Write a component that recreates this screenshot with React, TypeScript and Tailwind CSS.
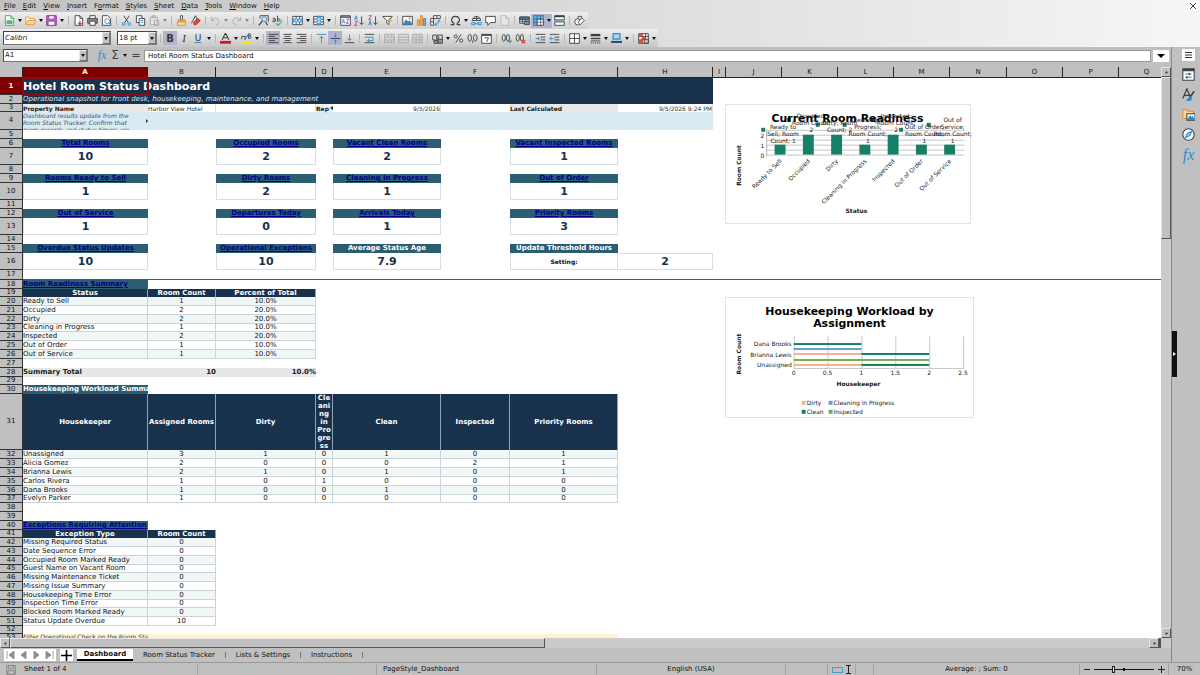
import type { ReactNode } from "react";
import clsx from "clsx";

/* ---------- icons ---------- */

const BLUE = "#2b8fd0";
const DARK = "#3f3f3f";
const MUTED = "#a9a9a9";

function Icon({ children, big }: { children: ReactNode; big?: boolean }) {
  return (
    <svg
      viewBox="0 0 16 16"
      className={big ? "h-[13px] w-[13px]" : "h-[11px] w-[11px]"}
      fill="none"
      stroke={DARK}
      strokeWidth="1.3"
      aria-hidden="true"
    >
      {children}
    </svg>
  );
}

const NewDoc = () => (
  <Icon>
    <path d="M2 1h8l4 4v10H2z" fill="#fff" stroke="#3aa757" />
    <path d="M10 1v4h4" stroke="#3aa757" />
    <path d="M4 8h8v5H4zM4 10.500h8M8 8v5" fill="#3aa757" stroke="#7fcf92" strokeWidth="0.8" />
  </Icon>
);
const OpenFolder = () => (
  <Icon>
    <path d="M1 14V3h5l1 2h7v3" fill="#fff3e0" stroke="#e9993a" />
    <path d="M1 14l3-6h12l-3 6z" fill="#fbd49c" stroke="#e9993a" />
  </Icon>
);
const Save = () => (
  <Icon>
    <path d="M1 1h14v14H1z" fill="#b366c9" stroke="#93359f" />
    <path d="M4 1h8v5H4zM3 9h10v6H3z" fill="#fff" stroke="#93359f" />
  </Icon>
);
const ExportPdf = () => (
  <Icon>
    <path d="M3 1h7l4 4v10H3z" fill="#fff" />
    <path d="M10 1v4h4" />
    <path d="M10 8v6M7.500 11.500L10 14l2.500-2.500" stroke="#d8332a" strokeWidth="1.600" />
  </Icon>
);
const Print = () => (
  <Icon>
    <path d="M4 5V1h8v4" fill="#fff" />
    <path d="M1 5h14v7H1z" fill="#8a8a8a" />
    <path d="M4 9h8v6H4z" fill="#fff" />
  </Icon>
);
const Preview = () => (
  <Icon>
    <path d="M2 1h8l4 4v10H2z" fill="#fff" />
    <circle cx="9" cy="9" r="3.500" stroke={BLUE} />
    <path d="M11.500 11.500L15 15" stroke={BLUE} />
  </Icon>
);
const Cut = () => (
  <Icon>
    <path d="M4 1l6.500 10M12 1L5.500 11" />
    <circle cx="4" cy="13" r="2" stroke={BLUE} />
    <circle cx="12" cy="13" r="2" stroke={BLUE} />
  </Icon>
);
const Copy = () => (
  <Icon>
    <path d="M2 1h8v10H2z" fill="#fff" />
    <path d="M6 5h8v10H6z" fill="#fff" />
    <path d="M8 8h4M8 10.500h4" stroke={BLUE} />
  </Icon>
);
const Paste = () => (
  <Icon>
    <path d="M2 3h10v11H2zM5 1h4v3H5zM8 8h6v7H8z" fill="#e4e4e4" stroke={MUTED} />
  </Icon>
);
const Brush = () => (
  <Icon>
    <path d="M6.500 1h3v6h-3z" fill="#fff" />
    <path d="M3 7h10v3H3z" fill="#f2b166" stroke="#e08a2c" />
    <path d="M2 10h12v5H2z" fill="#f8d9ae" stroke="#e08a2c" />
  </Icon>
);
const Eraser = () => (
  <Icon>
    <path d="M2 12L8 1l3 8" />
    <path d="M5 11l6-6 4 3-6 6H6z" fill="#e5483e" stroke="#c8281e" />
  </Icon>
);
const Undo = () => (
  <Icon>
    <path d="M2 3v5h5M2 8c3-5 10-5 11 1 0 3-2 5-4 5" stroke={MUTED} />
  </Icon>
);
const Redo = () => (
  <Icon>
    <path d="M14 3v5H9M14 8C11 3 4 3 3 9c0 3 2 5 4 5" stroke={MUTED} />
  </Icon>
);
const Find = () => (
  <Icon>
    <path d="M3 5V1h12v9" />
    <circle cx="9" cy="6" r="3.500" stroke={BLUE} />
    <path d="M6.500 8.500L1 15M11 10l3 5" strokeWidth="1.600" />
  </Icon>
);
const Spelling = () => (
  <Icon>
    <path d="M1 5c3-1 4 0 4 2v2M5 7c-5 0-5 3-2 3l2-1M8 1v8c5 1 5-5 0-3" />
    <path d="M6 12l3 3 6-7" stroke="#3aa757" strokeWidth="1.600" />
  </Icon>
);
const RowTable = () => (
  <Icon>
    <path d="M1 2h14v12H1zM6 2v12M11 2v12" fill="#fff" />
    <path d="M1 6h14v4H1z" fill="#63b3ea" stroke={BLUE} />
    <path d="M6 6v4M11 6v4" stroke="#fff" />
  </Icon>
);
const ColTable = () => (
  <Icon>
    <path d="M1 2h14v12H1zM1 6h14M1 10h14" fill="#fff" />
    <path d="M6 2h5v12H6z" fill="#63b3ea" stroke={BLUE} />
    <path d="M6 6h5M6 10h5" stroke="#fff" />
  </Icon>
);
const SortDialog = () => (
  <Icon>
    <path d="M1 1h14v14H1z" fill="#fff" />
    <path d="M1 3h14" strokeWidth="2" />
    <path d="M3 12l2-6 2 6M4 10h2" stroke={BLUE} />
    <path d="M9 6h4l-4 6h4" stroke="#a53fb8" />
  </Icon>
);
const SortAsc = () => (
  <Icon>
    <path d="M1 7l2-6 2 6M2 5h2" stroke={BLUE} />
    <path d="M1 9h4l-4 6h4" stroke="#a53fb8" />
    <path d="M11 2v12M8 11l3 3 3-3" />
  </Icon>
);
const SortDesc = () => (
  <Icon>
    <path d="M1 1h4L1 7h4" stroke="#a53fb8" />
    <path d="M1 15l2-6 2 6M2 13h2" stroke={BLUE} />
    <path d="M11 2v12M8 11l3 3 3-3" />
  </Icon>
);
const Filter = () => (
  <Icon>
    <path d="M1 2h14l-5 6v6l-3-2V8z" fill="#fff" />
    <path d="M8 8l4-3M8 14l6-7" stroke="#e9993a" strokeWidth="1.600" />
  </Icon>
);
const Picture = () => (
  <Icon>
    <path d="M1 2h14v12H1z" fill="#fff" />
    <path d="M2 13l4-6 3 3 2-2 3 5z" fill={BLUE} stroke={BLUE} />
    <circle cx="11" cy="5" r="1" fill="#e9993a" stroke="#e9993a" />
  </Icon>
);
const ChartIcon = () => (
  <Icon>
    <path d="M2 7h3v8H2z" fill="#f2b166" stroke="#e08a2c" />
    <path d="M6.500 1h3v14h-3z" fill="#f2b166" stroke="#e08a2c" />
    <path d="M11 5h3v10h-3z" fill="#63b3ea" stroke={BLUE} />
  </Icon>
);
const Pivot = () => (
  <Icon>
    <path d="M1 5h4v10H1zM5 1h10v4H5zM1 10h4M10 1v4" fill="#fff" />
    <path d="M7 14c4 0 6-2 6-6M11 10l2-3 2 3M9 11l-2 3 3 2" stroke={BLUE} />
  </Icon>
);
const Omega = () => (
  <Icon>
    <path d="M1 14h4.500v-2C0 9 2 2 8 2s8 7 2.500 10v2H15" strokeWidth="1.500" />
  </Icon>
);
const Hyperlink = () => (
  <Icon>
    <path d="M2 8a6 6 0 0112 0zM8 2v6M3 5h10" />
    <path d="M1 11h5v3H1zM10 11h5v3h-5zM5 12.500h6" stroke={BLUE} />
  </Icon>
);
const Comment = () => (
  <Icon>
    <path d="M1 2h14v9H8l-4 4v-4H1z" fill="#fff" />
  </Icon>
);
const HeaderFooter = () => (
  <Icon>
    <path d="M3 1h7l4 4v10H3z" fill="#e6e6e6" stroke="#b8b8b8" />
    <path d="M10 1v4h4" stroke="#b8b8b8" />
  </Icon>
);
const PrintArea = () => (
  <Icon>
    <path d="M1 3h14v9H1zM1 6h14M1 9h14M5 3v9M10 3v9" fill="#fff" />
    <path d="M1 3h14v3H1z" fill={BLUE} />
    <path d="M8 9h7v5H8z" fill="#8a8a8a" />
  </Icon>
);
const Freeze = () => (
  <Icon>
    <path d="M1 1h14v14H1z" fill="#fff" />
    <path d="M1 1h14v5H6v9H1z" fill="#63b3ea" stroke={BLUE} />
    <path d="M6 1v14M11 1v14M1 6h14M1 10.500h14" strokeWidth="0.900" />
  </Icon>
);
const SplitWindow = () => (
  <Icon>
    <path d="M1 1h14v6H1zM1 10h14v5H1z" fill="#fff" />
    <path d="M1 2h14" strokeWidth="2.500" />
    <path d="M0 8.500h16" stroke={BLUE} strokeDasharray="2 1" />
  </Icon>
);
const Shapes = () => (
  <Icon>
    <path d="M6 2h5v5H6z" fill="#fff" />
    <circle cx="5.500" cy="10" r="4.500" fill="#fff" />
    <path d="M11 4l4 4-6 6-3-3z" fill="#fff" />
  </Icon>
);

const AlignLeft = () => (
  <Icon>
    <path d="M1 2h14M1 5h9M1 8h14M1 11h9M1 14h14" />
  </Icon>
);
const AlignCenter = () => (
  <Icon>
    <path d="M2 2h12M4 5h8M2 8h12M4 11h8M2 14h12" />
  </Icon>
);
const AlignRight = () => (
  <Icon>
    <path d="M1 2h14M6 5h9M1 8h14M6 11h9M1 14h14" />
  </Icon>
);
const AlignTop = () => (
  <Icon>
    <path d="M1 2h14" stroke={BLUE} />
    <path d="M8 14V5M5 8l3-3 3 3" stroke={BLUE} />
  </Icon>
);
const AlignMiddle = () => (
  <Icon>
    <path d="M1 8h14" />
    <path d="M8 0v6M6 4l2 2 2-2M8 16v-6M6 12l2-2 2 2" stroke={BLUE} />
  </Icon>
);
const AlignBottom = () => (
  <Icon>
    <path d="M1 14h14" />
    <path d="M8 2v9M5 8l3 3 3-3" stroke={BLUE} />
  </Icon>
);
const Wrap = () => (
  <Icon>
    <path d="M1 2h14M1 14h14" />
    <path d="M1 6h12v5H5M8 8l-3 3 3 2" stroke={BLUE} />
  </Icon>
);
const Merge = () => (
  <Icon>
    <path d="M1 2h14v12H1zM1 6h14M1 10h14M6 2v4M11 2v4M6 10v4M11 10v4" stroke={MUTED} />
  </Icon>
);
const MergeAll = () => (
  <Icon>
    <path d="M1 2h14v12H1zM1 6h14M1 10h14" stroke={MUTED} />
  </Icon>
);
const Unmerge = () => (
  <Icon>
    <path d="M1 2h14v12H1zM1 6h14M1 10h14M6 2v12M11 2v12" stroke={MUTED} />
  </Icon>
);
const Currency = () => (
  <Icon>
    <path d="M1 3h14v7H1z" fill="#ddd" />
    <circle cx="8" cy="6.500" r="2" fill="#999" />
    <path d="M3 11h5v4H3zM9 9h6v6H9z" fill="#999" />
  </Icon>
);
const Percent = () => (
  <Icon>
    <circle cx="4" cy="5" r="2.300" />
    <circle cx="12" cy="11" r="2.300" />
    <path d="M12 2L4 14" />
  </Icon>
);
const Decimal = () => (
  <Icon>
    <ellipse cx="4" cy="7" rx="2.600" ry="5" />
    <ellipse cx="12" cy="7" rx="2.600" ry="5" />
    <path d="M8 11v3" />
  </Icon>
);
const DateIcon = () => (
  <Icon>
    <path d="M1 2h14v13H1z" fill="#fff" />
    <path d="M1 3h14" strokeWidth="2.200" />
    <path d="M5 7h6l-3 6" />
  </Icon>
);
const AddDecimal = () => (
  <Icon>
    <ellipse cx="4" cy="7" rx="2.300" ry="5" />
    <ellipse cx="10" cy="7" rx="2.300" ry="5" />
    <path d="M13 9v6M10 12h6" stroke={BLUE} strokeWidth="1.600" />
  </Icon>
);
const RemoveDecimal = () => (
  <Icon>
    <ellipse cx="4" cy="7" rx="2.300" ry="5" />
    <ellipse cx="10" cy="7" rx="2.300" ry="5" />
    <path d="M10 10l5 5M15 10l-5 5" stroke="#d8332a" strokeWidth="1.600" />
  </Icon>
);
const IndentMore = () => (
  <Icon>
    <path d="M1 2h14M8 6h7M8 10h7M1 14h14" />
    <path d="M1 8h5M4 5.500L6.500 8 4 10.500" stroke={BLUE} />
  </Icon>
);
const IndentLess = () => (
  <Icon>
    <path d="M1 2h14M8 6h7M8 10h7M1 14h14" />
    <path d="M7 8H1M4 5.500L1 8l3 2.500" stroke={BLUE} />
  </Icon>
);
const Borders = () => (
  <Icon>
    <path d="M1 1h14v14H1z" fill="#fff" />
    <path d="M8 1v14M1 8h14" />
  </Icon>
);
const BorderStyle = () => (
  <Icon>
    <path d="M1 3h14" strokeWidth="3.500" />
    <path d="M1 8h14" strokeWidth="2" />
    <path d="M1 11.500h14" />
    <path d="M1 14.500h14" strokeDasharray="2 1" />
  </Icon>
);
const BorderColor = () => (
  <Icon>
    <path d="M3 1h10v8H3z" fill="#a9d4f2" stroke={BLUE} strokeWidth="1.800" />
    <path d="M0 13h16" stroke="#1f4e79" strokeWidth="3" />
  </Icon>
);
const Conditional = () => (
  <Icon>
    <path d="M1 1h14v14H1zM1 5h14M1 10h14M6 1v14M11 1v14" fill="#fff" />
    <path d="M2 2h4v3H2zM2 10h4v4H2zM7 6h4v3H7z" fill="#e5483e" stroke="#e5483e" />
    <path d="M9 9h6v6H9z" fill="#bbb" />
  </Icon>
);
const FontColor = () => (
  <Icon>
    <path d="M3 10L8 0l5 10M5 7h6" strokeWidth="1.600" />
    <path d="M0 13.500h16" stroke="#c8191e" strokeWidth="4" />
  </Icon>
);
const Highlight = () => (
  <Icon>
    <path d="M1 9V5h5v5M11 8V1c5 0 4 3 0 3 5 0 5 4 0 4" />
    <path d="M5 9l6-7" stroke={BLUE} strokeWidth="2" />
    <path d="M0 13.500h16" stroke="#f5ea14" strokeWidth="4" />
  </Icon>
);

/* ---------- toolbars ---------- */

function Tool({
  label,
  active,
  children,
}: {
  label: string;
  active?: boolean;
  children: ReactNode;
}) {
  return (
    <button
      aria-label={label}
      className={clsx(
        "flex h-[14px] w-[14px] shrink-0 items-center justify-center",
        active && "bg-[#b3b3cf]"
      )}
    >
      {children}
    </button>
  );
}

function Caret({ active, muted }: { active?: boolean; muted?: boolean }) {
  return (
    <button
      aria-label="More options"
      className={clsx(
        "flex h-[14px] w-[7px] shrink-0 items-center justify-center",
        active && "bg-[#b3b3cf]"
      )}
    >
      <svg viewBox="0 0 4 3" className="h-[3px] w-1" aria-hidden="true">
        <path d="M0 0h4L2 3z" fill={muted ? "#8a8a8a" : "#111"} />
      </svg>
    </button>
  );
}

function Sep() {
  return (
    <span className="flex w-[6px] shrink-0 justify-center">
      <span className="h-[9px] w-px bg-[#b5b5b5]" />
    </span>
  );
}

function Combo({ label, value, className }: { label: string; value: string; className: string }) {
  return (
    <div
      className={clsx(
        "flex shrink-0 border border-[#777] border-t-[#444] border-l-[#444] bg-white",
        className
      )}
    >
      <input
        aria-label={label}
        defaultValue={value}
        className={clsx("min-w-0 flex-1 px-px outline-none", label === "Font name" && "italic")}
      />
      <button
        aria-label={`${label} list`}
        className="flex w-2 items-center justify-center border border-[#e8e8e8] border-r-[#777] border-b-[#777] bg-[#c3c3c3]"
      >
        <svg viewBox="0 0 4 3" className="h-[3px] w-1" aria-hidden="true">
          <path d="M0 0h4L2 3z" fill="#111" />
        </svg>
      </button>
    </div>
  );
}

const MENU = ["File", "Edit", "View", "Insert", "Format", "Styles", "Sheet", "Data", "Tools", "Window", "Help"];

function MenuBar() {
  return (
    <nav className="flex h-3 items-center gap-[7px] pl-1">
      {MENU.map((item) => (
        <button key={item}>
          {item === "Format" ? (
            <>
              F<span className="underline">o</span>rmat
            </>
          ) : (
            <>
              <span className="underline">{item[0]}</span>
              {item.slice(1)}
            </>
          )}
        </button>
      ))}
      <button
        aria-label="Close document"
        className="mr-[2px] ml-auto flex h-[10px] w-[10px] items-center justify-center bg-white"
      >
        <svg viewBox="0 0 6 6" className="h-[6px] w-[6px]" aria-hidden="true">
          <path d="M0 0l6 6M6 0L0 6" stroke="#444" />
        </svg>
      </button>
    </nav>
  );
}

function StandardToolbar() {
  return (
    <div className="flex h-[17px] w-max items-center bg-linear-to-b from-[#efefef] to-[#cfcfcf] pr-[2px] pl-[2px]">
      <Tool label="New"><NewDoc /></Tool>
      <Caret />
      <Tool label="Open"><OpenFolder /></Tool>
      <Caret />
      <Tool label="Save"><Save /></Tool>
      <Caret />
      <Sep />
      <Tool label="Export as PDF"><ExportPdf /></Tool>
      <Tool label="Print"><Print /></Tool>
      <Tool label="Print preview"><Preview /></Tool>
      <Sep />
      <Tool label="Cut"><Cut /></Tool>
      <Tool label="Copy"><Copy /></Tool>
      <Tool label="Paste"><Paste /></Tool>
      <Caret muted />
      <Sep />
      <Tool label="Clone formatting"><Brush /></Tool>
      <Tool label="Clear formatting"><Eraser /></Tool>
      <Sep />
      <Tool label="Undo"><Undo /></Tool>
      <Caret muted />
      <Tool label="Redo"><Redo /></Tool>
      <Caret muted />
      <Sep />
      <Tool label="Find and replace"><Find /></Tool>
      <Tool label="Spelling"><Spelling /></Tool>
      <Sep />
      <Tool label="Row"><RowTable /></Tool>
      <Caret />
      <Tool label="Column"><ColTable /></Tool>
      <Caret />
      <Sep />
      <Tool label="Sort"><SortDialog /></Tool>
      <Tool label="Sort ascending"><SortAsc /></Tool>
      <Tool label="Sort descending"><SortDesc /></Tool>
      <Tool label="AutoFilter"><Filter /></Tool>
      <Sep />
      <Tool label="Insert image"><Picture /></Tool>
      <Tool label="Insert chart"><ChartIcon /></Tool>
      <Tool label="Pivot table"><Pivot /></Tool>
      <Sep />
      <Tool label="Special character"><Omega /></Tool>
      <Caret />
      <Tool label="Hyperlink"><Hyperlink /></Tool>
      <Tool label="Comment"><Comment /></Tool>
      <Tool label="Headers and footers"><HeaderFooter /></Tool>
      <Sep />
      <Tool label="Print area"><PrintArea /></Tool>
      <Tool label="Freeze rows and columns" active><Freeze /></Tool>
      <Caret active />
      <Tool label="Split window"><SplitWindow /></Tool>
      <Sep />
      <Tool label="Draw functions"><Shapes /></Tool>
    </div>
  );
}

function FormattingToolbar() {
  return (
    <div className="flex h-[18px] w-max items-center bg-linear-to-b from-[#efefef] to-[#c6c6c6] pr-px pl-[3px]">
      <Combo label="Font name" value="Calibri" className="mr-[6px] h-[14px] w-[108px]" />
      <Combo label="Font size" value="18 pt" className="h-[14px] w-[40px]" />
      <Sep />
      <Tool label="Bold" active><span className="text-[10px] font-bold text-[#333]">B</span></Tool>
      <Tool label="Italic"><span className="font-[Liberation_Serif] text-[11px] text-[#333] italic">I</span></Tool>
      <Tool label="Underline">
        <span className="text-[9px] text-[#333] underline decoration-[#2b8fd0]">U</span>
      </Tool>
      <Caret />
      <Sep />
      <Tool label="Font color"><FontColor /></Tool>
      <Caret />
      <Tool label="Highlighting"><Highlight /></Tool>
      <Caret />
      <Sep />
      <Tool label="Align left" active><AlignLeft /></Tool>
      <Tool label="Align center"><AlignCenter /></Tool>
      <Tool label="Align right"><AlignRight /></Tool>
      <Sep />
      <Tool label="Align top"><AlignTop /></Tool>
      <Tool label="Center vertically" active><AlignMiddle /></Tool>
      <Tool label="Align bottom"><AlignBottom /></Tool>
      <Sep />
      <Tool label="Wrap text"><Wrap /></Tool>
      <Sep />
      <Tool label="Merge and center"><Merge /></Tool>
      <Tool label="Merge cells"><MergeAll /></Tool>
      <Tool label="Unmerge cells"><Unmerge /></Tool>
      <Sep />
      <Tool label="Currency"><Currency /></Tool>
      <Caret />
      <Tool label="Percent"><Percent /></Tool>
      <Tool label="Number"><Decimal /></Tool>
      <Tool label="Date"><DateIcon /></Tool>
      <Sep />
      <Tool label="Add decimal place"><AddDecimal /></Tool>
      <Tool label="Delete decimal place"><RemoveDecimal /></Tool>
      <Sep />
      <Tool label="Increase indent"><IndentMore /></Tool>
      <Tool label="Decrease indent"><IndentLess /></Tool>
      <Sep />
      <Tool label="Borders"><Borders /></Tool>
      <Caret />
      <Tool label="Border style"><BorderStyle /></Tool>
      <Caret />
      <Tool label="Border color"><BorderColor /></Tool>
      <Caret />
      <Sep />
      <Tool label="Conditional formatting"><Conditional /></Tool>
      <Caret />
    </div>
  );
}

function FormulaBar() {
  return (
    <div className="flex h-5 shrink-0 items-center bg-[#c0c0c0] pr-[2px] pb-[3px] pl-[3px]">
      <Combo label="Name box" value="A1" className="h-[13px] w-[85px]" />
      <button
        aria-label="Function wizard"
        className="ml-[7px] w-[14px] font-[Liberation_Serif] text-[12px] text-[#2b8fd0] italic"
      >
        fx
      </button>
      <button aria-label="Select function" className="w-[12px] text-[12px] text-[#3f3f3f]">
        Σ
      </button>
      <Caret />
      <button aria-label="Formula" className="mx-[2px] w-[12px] text-[11px] text-[#3f3f3f]">
        =
      </button>
      <input
        aria-label="Input line"
        defaultValue="Hotel Room Status Dashboard"
        className="h-3 min-w-0 flex-1 border border-[#999] bg-white px-[3px] outline-none"
      />
      <button
        aria-label="Expand formula bar"
        className="ml-[2px] flex h-3 w-4 items-center justify-center bg-white"
      >
        <svg viewBox="0 0 8 4" className="h-1 w-2" aria-hidden="true">
          <path d="M0 0h8L4 4z" fill="#000" />
        </svg>
      </button>
    </div>
  );
}

/* ---------- sheet data ---------- */

const COLUMNS = [
  ["A", "w-[125px]"],
  ["B", "w-[68px]"],
  ["C", "w-[100px]"],
  ["D", "w-[17px]"],
  ["E", "w-[108px]"],
  ["F", "w-[69px]"],
  ["G", "w-[108px]"],
  ["H", "w-[95px]"],
  ["I", "w-[13px]"],
  ["J", "w-[56px]"],
  ["K", "w-[56px]"],
  ["L", "w-[56px]"],
  ["M", "w-[56px]"],
  ["N", "w-[57px]"],
  ["O", "w-[56px]"],
  ["P", "w-[56px]"],
  ["Q", "w-[56px]"],
];

// every row that is not 9px high
const ROW_HEIGHTS: Record<number, string> = {
  1: "h-[17px]",
  3: "h-[8px]",
  4: "h-[18px]",
  7: "h-[17px]",
  10: "h-[17px]",
  13: "h-[17px]",
  16: "h-[17px]",
  17: "h-[10px]",
  19: "h-[8px]",
  23: "h-[8px]",
  29: "h-[8px]",
  31: "h-[55px]",
  37: "h-[8px]",
  41: "h-[8px]",
  45: "h-[8px]",
  49: "h-[8px]",
  52: "h-[8px]",
};

interface Cell {
  value?: ReactNode;
  link?: boolean;
  className: string;
}

const cells: Record<string, Cell> = {};

function fill(row: number, letters: string, className: string) {
  for (const letter of letters) cells[letter + row] = { className };
}

const GRID = "border-r border-b border-[#c9d3d8]";
const NAVY = "bg-[#18324d] text-white font-bold text-center border-r border-[#8fa5b5]";
const TEAL = "bg-[#2b5d73] text-white font-bold";
const BIG = "border-x border-b border-[#d8dfe3] text-[11px] text-center font-bold text-[#18324d]";

fill(1, "ABCDEFGH", "bg-[#18324d]");
fill(2, "ABCDEFGH", "bg-[#18324d]");
fill(4, "ABCDEFGH", "bg-[#d9eaf3]");
fill(53, "ABCDEFG", "bg-[#fff2cc]");
cells.A1 = {
  value: "Hotel Room Status Dashboard",
  className: "bg-[#18324d] text-[11px] font-bold text-white outline-2 -outline-offset-1 outline-[#8b0a14]",
};
cells.A2 = {
  value: "Operational snapshot for front desk, housekeeping, maintenance, and management",
  className: "bg-[#18324d] italic text-[#dbe6ee]",
};
cells.A3 = { value: "Property Name", className: "bg-[#e8e8e8] text-[6px] font-bold text-[#222]" };
cells.B3 = { value: "Harbor View Hotel", className: "text-[6px] text-[#333] border-r border-[#ddd]" };
cells.C3 = { className: "border-r border-[#ddd]" };
cells.D3 = {
  value: (
    <span className="flex items-center justify-between">
      Rep
      <svg viewBox="0 0 3 4" className="h-1 w-[3px]" aria-hidden="true">
        <path d="M0 2l3-2v4z" fill="#18324d" />
      </svg>
    </span>
  ),
  className: "bg-[#f2f2f2] text-[6px] font-bold text-[#222]",
};
cells.E3 = { value: "9/5/2026", className: "text-[6px] text-right text-[#333] border-r border-[#ddd]" };
cells.G3 = { value: "Last Calculated", className: "bg-[#e8e8e8] text-[6px] font-bold text-[#222]" };
cells.H3 = { value: "9/5/2026 9:24 PM", className: "text-[6px] text-right text-[#333] border-r border-[#ddd]" };
cells.A4 = {
  value: (
    <div className="relative h-[18px] overflow-hidden pr-[10px] whitespace-normal">
      Dashboard results update from the Room Status Tracker. Confirm that room records and status timers are
      <svg viewBox="0 0 2 4" className="absolute top-[7px] right-0 h-1 w-[2px]" aria-hidden="true">
        <path d="M0 0l2 2-2 2z" fill="#18324d" />
      </svg>
    </div>
  ),
  className: "bg-[#d9eaf3] text-[6px] italic text-[#3f4f5c]",
};

const KPIS: [number, string[], string[]][] = [
  [6, ["Total Rooms", "Occupied Rooms", "Vacant Clean Rooms", "Vacant Inspected Rooms"], ["10", "2", "2", "1"]],
  [9, ["Rooms Ready to Sell", "Dirty Rooms", "Cleaning In Progress", "Out of Order"], ["1", "2", "1", "1"]],
  [12, ["Out of Service", "Departures Today", "Arrivals Today", "Priority Rooms"], ["1", "0", "1", "3"]],
  [
    15,
    ["Overdue Status Updates", "Operational Exceptions", "Average Status Age", "Update Threshold Hours"],
    ["10", "10", "7.9", "Setting:"],
  ],
];
KPIS.forEach(([row, titles, values]) => {
  ["A", "C", "E", "G"].forEach((letter, i) => {
    const link = row !== 15 || i < 2;
    cells[letter + row] = { value: titles[i], link, className: clsx(TEAL, "text-center") };
    cells[letter + (row + 1)] = { value: values[i], className: BIG };
  });
});
cells.G16 = { value: "Setting:", className: "border-x border-b border-[#d8dfe3] text-[6px] text-center font-bold" };
cells.H16 = { value: "2", className: clsx(BIG, "border-t border-l-0") };

const COLS_ALL = "ABCDEFG";

function putRows(start: number, rows: (string | number)[][]) {
  rows.forEach((row, r) => {
    row.forEach((value, c) => {
      cells[COLS_ALL[c] + (start + r)] = {
        value,
        className: clsx(GRID, r % 2 === 0 ? "bg-[#f1f6f7]" : "bg-white", c > 0 && "text-center"),
      };
    });
  });
}

function putHeader(row: number, titles: string[]) {
  titles.forEach((value, c) => {
    cells[COLS_ALL[c] + row] = { value, className: clsx(NAVY, "whitespace-pre-line") };
  });
}

cells.A18 = { value: "Room Readiness Summary", link: true, className: TEAL };
putHeader(19, ["Status", "Room Count", "Percent of Total"]);
putRows(20, [
  ["Ready to Sell", 1, "10.0%"],
  ["Occupied", 2, "20.0%"],
  ["Dirty", 2, "20.0%"],
  ["Cleaning in Progress", 1, "10.0%"],
  ["Inspected", 2, "20.0%"],
  ["Out of Order", 1, "10.0%"],
  ["Out of Service", 1, "10.0%"],
]);
cells.A28 = { value: "Summary Total", className: "bg-[#e7e7e7] font-bold text-[#222]" };
cells.B28 = { value: "10", className: "bg-[#e7e7e7] font-bold text-[#222] text-right" };
cells.C28 = { value: "10.0%", className: "bg-[#e7e7e7] font-bold text-[#222] text-right" };

cells.A30 = { value: "Housekeeping Workload Summary", className: clsx(TEAL, "overflow-hidden") };
putHeader(31, [
  "Housekeeper",
  "Assigned Rooms",
  "Dirty",
  "Cle\nani\nng\nin\nPro\ngre\nss",
  "Clean",
  "Inspected",
  "Priority Rooms",
]);
putRows(32, [
  ["Unassigned", 3, 1, 0, 1, 0, 1],
  ["Alicia Gomez", 2, 0, 0, 0, 2, 1],
  ["Brianna Lewis", 2, 1, 0, 1, 0, 1],
  ["Carlos Rivera", 1, 0, 1, 0, 0, 0],
  ["Dana Brooks", 1, 0, 0, 1, 0, 0],
  ["Evelyn Parker", 1, 0, 0, 0, 0, 0],
]);

cells.A40 = { value: "Exceptions Requiring Attention", link: true, className: TEAL };
putHeader(41, ["Exception Type", "Room Count"]);
putRows(42, [
  ["Missing Required Status", 0],
  ["Date Sequence Error", 0],
  ["Occupied Room Marked Ready", 0],
  ["Guest Name on Vacant Room", 0],
  ["Missing Maintenance Ticket", 0],
  ["Missing Issue Summary", 0],
  ["Housekeeping Time Error", 0],
  ["Inspection Time Error", 0],
  ["Blocked Room Marked Ready", 0],
  ["Status Update Overdue", 10],
]);
cells.A53 = {
  value: "Filter Operational Check on the Room Status Tracker",
  className: "bg-[#fff2cc] text-[6px] leading-[6px] italic text-[#3b3050] overflow-hidden",
};

const ROWS = Array.from({ length: 53 }, (_, i) => i + 1);

function Sheet() {
  return (
    <table className="w-px table-fixed border-separate border-spacing-0 leading-[7px] whitespace-nowrap">
      <colgroup>
        <col className="w-[23px]" />
        {COLUMNS.map(([letter, width]) => (
          <col key={letter} className={width} />
        ))}
      </colgroup>
      <thead>
        <tr>
          <th aria-label="Select all" className="h-[11px] border-r border-b border-[#222] bg-[#c0c0c0] p-0" />
          {COLUMNS.map(([letter]) => (
            <th
              key={letter}
              className={clsx(
                "h-[11px] border-r border-b border-[#222] p-0 text-center",
                letter === "A" ? "bg-[#800000] font-bold text-white" : "bg-[#c0c0c0] font-normal"
              )}
            >
              {letter}
            </th>
          ))}
        </tr>
      </thead>
      <tbody>
        {ROWS.map((row) => (
          <tr key={row}>
            <th
              className={clsx(
                "border-r border-b border-[#333] p-0 text-center",
                row === 53 ? "align-top" : "align-middle",
                ROW_HEIGHTS[row] ?? "h-[9px]",
                row === 1 ? "bg-[#800000] font-bold text-white" : "bg-[#c0c0c0] font-normal"
              )}
            >
              {row}
            </th>
            {COLUMNS.map(([letter]) => {
              const cell = cells[letter + row];
              return (
                <td
                  key={letter}
                  className={clsx(
                    "p-0",
                    row === 53 ? "align-top" : "align-middle",
                    row === 17 && "border-b border-[#555]",
                    row === 31 && "leading-[8px]",
                    cell?.className
                  )}
                >
                  {cell?.link ? (
                    <a href="#tracker" className="text-[#00008b] underline">
                      {cell.value}
                    </a>
                  ) : (
                    cell?.value
                  )}
                </td>
              );
            })}
          </tr>
        ))}
      </tbody>
    </table>
  );
}

/* ---------- charts ---------- */

const GREEN = "#177e67";

interface Readiness {
  name: string;
  value: number;
  label: string[];
  labelY: number;
  key: [number, number];
}

const READINESS: Readiness[] = [
  { name: "Ready to Sell", value: 1, label: ["Ready to", "Sell; Room", "Count; 1"], labelY: 24, key: [35, 23] },
  { name: "Occupied", value: 2, label: ["Occupied;", "Room Count;", "2"], labelY: 13, key: [61, 13] },
  { name: "Dirty", value: 2, label: ["Dirty; Room", "Count; 2"], labelY: 20, key: [90, 18] },
  { name: "Cleaning in Progress", value: 1, label: ["Cleaning in", "Progress;", "Room Count;", "1"], labelY: 17, key: [117, 18] },
  { name: "Inspected", value: 2, label: ["Inspected;", "Room Count;", "2"], labelY: 13, key: [146, 13] },
  { name: "Out of Order", value: 1, label: ["Out of Order;", "Room Count;", "1"], labelY: 24, key: [174, 23] },
  { name: "Out of Service", value: 1, label: ["Out of", "Service;", "Room Count;", "1"], labelY: 17, key: [202, 18] },
];

function ReadinessChart() {
  return (
    <svg
      viewBox="0 0 245 119"
      className="absolute top-[37px] left-[725px] h-[120px] w-[246px] overflow-visible border border-[#e3e3e3] bg-white"
      role="img"
      aria-label="Current Room Readiness"
      fontSize="6"
      fill="#222"
    >
      {[25, 30, 35, 40, 45, 50].map((y) => (
        <path key={y} d={`M40 ${y + 0.5}H240`} stroke="#c4c4c4" />
      ))}
      <path d="M40.500 25V52" stroke="#b5b5b5" />
      {[0, 1, 2].map((v) => (
        <text key={v} x="38" y={53 - v * 10} textAnchor="end">
          {v}
        </text>
      ))}
      {READINESS.map((item, i) => {
        const x = 54 + i * 28.5;
        return (
          <g key={item.name}>
            <rect x={x - 5.5} y={50 - item.value * 10} width="11" height={item.value * 10} fill={GREEN} />
            <rect x={item.key[0]} y={item.key[1]} width="4" height="4" fill={GREEN} />
            <text transform={`translate(${x + 2} 57) rotate(-45)`} textAnchor="end">
              {item.name}
            </text>
          </g>
        );
      })}
      <text x="122" y="17" fontSize="11" fontWeight="bold" fill="#000" textAnchor="middle">
        Current Room Readiness
      </text>
      {READINESS.map((item, i) =>
        item.label.map((line, n) => (
          <text key={item.name + n} x={57 + i * 28.5} y={item.labelY + n * 7} textAnchor="middle">
            {line}
          </text>
        ))
      )}
      <text transform="translate(15 61) rotate(-90)" fontWeight="bold" textAnchor="middle">
        Room Count
      </text>
      <text x="131" y="109" fontWeight="bold" textAnchor="middle">
        Status
      </text>
    </svg>
  );
}

const BARS: [number, number, number, string][] = [
  [0, 1, 45, GREEN],
  [0, 1, 50, "#6b9bdb"],
  [0, 1, 55, "#f2b48c"],
  [1, 2, 55, GREEN],
  [0, 2, 61, "#73b052"],
  [0, 1, 66, "#f2b48c"],
  [1, 2, 66, GREEN],
];

const LEGEND: [number, number, string, string][] = [
  [76, 107, "Dirty", "#f2b48c"],
  [103, 107, "Cleaning in Progress", "#6b9bdb"],
  [76, 116, "Clean", GREEN],
  [103, 116, "Inspected", "#73b052"],
];

function WorkloadChart() {
  return (
    <svg
      viewBox="0 0 248 119"
      className="absolute top-[230px] left-[725px] h-[121px] w-[249px] border border-[#e3e3e3] bg-white"
      role="img"
      aria-label="Housekeeping Workload by Assignment"
      fontSize="6"
      fill="#222"
    >
      <g fontSize="11" fontWeight="bold" fill="#000" textAnchor="middle">
        <text x="124" y="17">Housekeeping Workload by</text>
        <text x="124" y="29">Assignment</text>
      </g>
      {[0, 0.5, 1, 1.5, 2, 2.5].map((v) => (
        <g key={v}>
          <path d={`M${68.5 + v * 68} 38V71`} stroke="#c8c8c8" />
          <text x={68 + v * 68} y="77" textAnchor="middle">
            {v}
          </text>
        </g>
      ))}
      <path d="M68 70.500H239" stroke="#c8c8c8" />
      {BARS.map(([from, to, y, color]) => (
        <rect key={`${from}-${y}`} x={68 + from * 68} y={y} width={(to - from) * 68} height="2" fill={color} />
      ))}
      <g textAnchor="end">
        <text x="66" y="48">Dana Brooks</text>
        <text x="66" y="59">Brianna Lewis</text>
        <text x="66" y="69">Unassigned</text>
      </g>
      <text transform="translate(15 56) rotate(-90)" fontWeight="bold" textAnchor="middle">
        Room Count
      </text>
      <text x="133" y="88" fontWeight="bold" textAnchor="middle">
        Housekeeper
      </text>
      {LEGEND.map(([x, y, name, color]) => (
        <g key={name}>
          <rect x={x} y={y - 4} width="4" height="4" fill={color} />
          <text x={x + 5} y={y}>
            {name}
          </text>
        </g>
      ))}
    </svg>
  );
}

/* ---------- window frame ---------- */

const RAISED = "border border-[#e6e6e6] border-r-[#555] border-b-[#555] bg-[#c0c0c0]";

function ScrollButton({ label, path, className }: { label: string; path: string; className?: string }) {
  return (
    <button
      aria-label={label}
      className={clsx("flex h-[10px] w-[10px] shrink-0 items-center justify-center", RAISED, className)}
    >
      <svg viewBox="0 0 4 4" className="h-[3px] w-[3px]" aria-hidden="true">
        <path d={path} fill="#333" />
      </svg>
    </button>
  );
}

function Sidebar() {
  return (
    <aside className="relative flex w-[29px] shrink-0 flex-col items-center gap-[7px] border-l border-[#888] bg-[#c0c0c0] pt-[2px] pl-[5px]">
      <button aria-label="Sidebar settings" className="flex h-[12px] w-[13px] items-center justify-center bg-white">
        <svg viewBox="0 0 7 6" className="h-[6px] w-[7px]" aria-hidden="true">
          <path d="M0 .5h7M0 3h7M0 5.500h7" stroke="#333" />
        </svg>
      </button>
      <button aria-label="Properties">
        <Icon big>
          <path d="M1 1h14v14H1z" fill="#fff" />
          <path d="M1 2.500h14" strokeWidth="3" />
          <path d="M4 7.500h8M4 11.500h8" stroke={BLUE} />
          <path d="M9 6v3M6 10v3" strokeWidth="1.600" />
        </Icon>
      </button>
      <button aria-label="Styles">
        <Icon big>
          <path d="M1 13L6 1l5 12M3 9h6" strokeWidth="1.500" />
          <path d="M15 4l-5 7" strokeWidth="2" />
          <path d="M10 11c-2 0-2 3-4 4 3 1 6 0 6-2z" fill={BLUE} stroke={BLUE} />
        </Icon>
      </button>
      <button aria-label="Gallery">
        <Icon big>
          <path d="M1 13V2h5l1 2h7v9z" fill="#fbd49c" stroke="#e9893a" />
          <path d="M6 7h10v8H6z" fill="#fff" />
          <path d="M7 14l3-4 2 2 1-1 2 3z" fill={BLUE} stroke={BLUE} />
        </Icon>
      </button>
      <button aria-label="Navigator">
        <Icon big>
          <circle cx="8" cy="8" r="7" fill="#fff" />
          <path d="M12 4l-2.500 5.500L4 12l2.500-5.500z" fill="#8fc8ef" stroke={BLUE} />
        </Icon>
      </button>
      <button
        aria-label="Functions"
        className="font-[Liberation_Serif] text-[16px] leading-[13px] text-[#2b8fd0] italic"
      >
        fx
      </button>
      <button
        aria-label="Hide sidebar"
        className="absolute top-[284px] left-0 flex h-[46px] w-[5px] items-center justify-center bg-[#111]"
      >
        <svg viewBox="0 0 3 4" className="h-1 w-[3px]" aria-hidden="true">
          <path d="M0 0l3 2-3 2z" fill="#fff" />
        </svg>
      </button>
    </aside>
  );
}

const NAV_BUTTONS = [
  ["First sheet", "M1 0v8M8 0L3 4l5 4z"],
  ["Previous sheet", "M7 0L2 4l5 4z"],
  ["Next sheet", "M2 0l5 4-5 4z"],
  ["Last sheet", "M1 0l5 4-5 4zM8 0v8"],
];

function SheetTabs() {
  return (
    <div className="flex h-[14px] shrink-0 items-center bg-[#c0c0c0] pl-1">
      {NAV_BUTTONS.map(([label, d]) => (
        <button key={label} aria-label={label} className="flex h-3 w-[13px] items-center justify-center bg-white">
          <svg viewBox="0 0 9 8" className="h-2 w-[9px]" fill="#8a8a8a" stroke="#8a8a8a" aria-hidden="true">
            <path d={d} strokeWidth="0.800" />
          </svg>
        </button>
      ))}
      <button aria-label="Add sheet" className="mx-1 flex h-3 w-[13px] items-center justify-center bg-white">
        <svg viewBox="0 0 11 11" className="h-[11px] w-[11px]" aria-hidden="true">
          <path d="M5.500 0v11M0 5.500h11" stroke="#000" strokeWidth="1.600" />
        </svg>
      </button>
      <button className="h-3 w-[56px] border-b-2 border-black bg-white pt-px font-bold">Dashboard</button>
      <button className="w-[92px]">Room Status Tracker</button>
      <span className="h-[6px] w-px bg-[#777]" />
      <button className="w-[74px]">Lists &amp; Settings</button>
      <span className="h-[6px] w-px bg-[#777]" />
      <button className="w-[61px]">Instructions</button>
      <span className="h-[6px] w-px bg-[#777]" />
    </div>
  );
}

function StatusBar() {
  return (
    <footer className="grid h-[13px] shrink-0 grid-cols-[198fr_179fr_220fr_189fr_42fr_28px_18px_206fr_89px_31px] items-stretch border-t border-[#999] bg-[#c0c0c0] pt-px *:flex *:items-center *:border-r *:border-[#a2a2a2]">
      <div className="gap-2 pl-[6px]">
        <svg viewBox="0 0 16 16" className="h-[10px] w-[10px]" fill="none" stroke="#888" strokeWidth="1.500" aria-hidden="true">
          <path d="M1 1h14v14H1zM4 1h8v5H4zM3 9h10v6H3z" />
        </svg>
        Sheet 1 of 4
      </div>
      <div />
      <div className="pl-[6px]">PageStyle_Dashboard</div>
      <div className="justify-center">English (USA)</div>
      <div />
      <div className="justify-center gap-[3px]">
        <span className="h-[6px] w-[11px] border border-[#4d9cc4]" />
        <svg viewBox="0 0 5 9" className="h-[9px] w-[5px]" aria-hidden="true">
          <path d="M0 .5h5M0 8.500h5M2.500 0v9" stroke="#222" />
        </svg>
      </div>
      <div />
      <div className="justify-center">Average: ; Sum: 0</div>
      <div className="justify-center gap-1">
        <button aria-label="Zoom out" className="h-px w-[6px] bg-[#222]" />
        <div className="relative flex items-center">
          <input
            type="range"
            aria-label="Zoom"
            defaultValue={32}
            className="h-[7px] w-[60px] appearance-none bg-transparent [&::-webkit-slider-runnable-track]:h-px [&::-webkit-slider-runnable-track]:bg-[#111] [&::-webkit-slider-thumb]:-mt-[3px] [&::-webkit-slider-thumb]:h-[7px] [&::-webkit-slider-thumb]:w-[3px] [&::-webkit-slider-thumb]:appearance-none [&::-webkit-slider-thumb]:border [&::-webkit-slider-thumb]:border-[#222] [&::-webkit-slider-thumb]:bg-[#ddd]"
          />
          <span className="absolute left-[29px] h-[3px] w-[2px] bg-[#111]" />
        </div>
        <button aria-label="Zoom in">
          <svg viewBox="0 0 7 7" className="h-[7px] w-[7px]" aria-hidden="true">
            <path d="M3.500 0v7M0 3.500h7" stroke="#222" />
          </svg>
        </button>
      </div>
      <div className="justify-center border-r-0!">70%</div>
    </footer>
  );
}

export default function App() {
  return (
    <div className="flex h-screen flex-col overflow-hidden bg-[#c0c0c0] font-['DejaVu_Sans',sans-serif] text-[7px] leading-[9px] text-[#111]">
      <header className="shrink-0 bg-linear-to-r from-[#c2c2c2] to-[#f6f6f6]">
        <MenuBar />
        <StandardToolbar />
        <FormattingToolbar />
      </header>
      <div className="flex min-h-0 flex-1">
        <div className="flex min-w-0 flex-1 flex-col">
          <FormulaBar />
          <div className="flex min-h-0 flex-1">
            <main className="relative min-w-0 flex-1 overflow-hidden bg-white">
              <Sheet />
              <ReadinessChart />
              <WorkloadChart />
            </main>
            <div className="flex w-[10px] shrink-0 flex-col bg-[#cbcbcb]">
              <ScrollButton label="Scroll up" path="M0 3h4L2 0z" />
              <div className={clsx("h-[162px]", RAISED)} />
              <ScrollButton label="Scroll down" path="M0 1h4L2 4z" className="mt-auto" />
            </div>
          </div>
          <div className="flex h-[10px] shrink-0 bg-[#cbcbcb] pr-[10px]">
            <ScrollButton label="Scroll left" path="M3 0v4L0 2z" />
            <div className={clsx("w-[535px]", RAISED)} />
            <ScrollButton label="Scroll right" path="M1 0v4l3-2z" className="ml-auto" />
            <span className="w-[2px] bg-[#555]" />
          </div>
          <SheetTabs />
        </div>
        <Sidebar />
      </div>
      <StatusBar />
    </div>
  );
}
